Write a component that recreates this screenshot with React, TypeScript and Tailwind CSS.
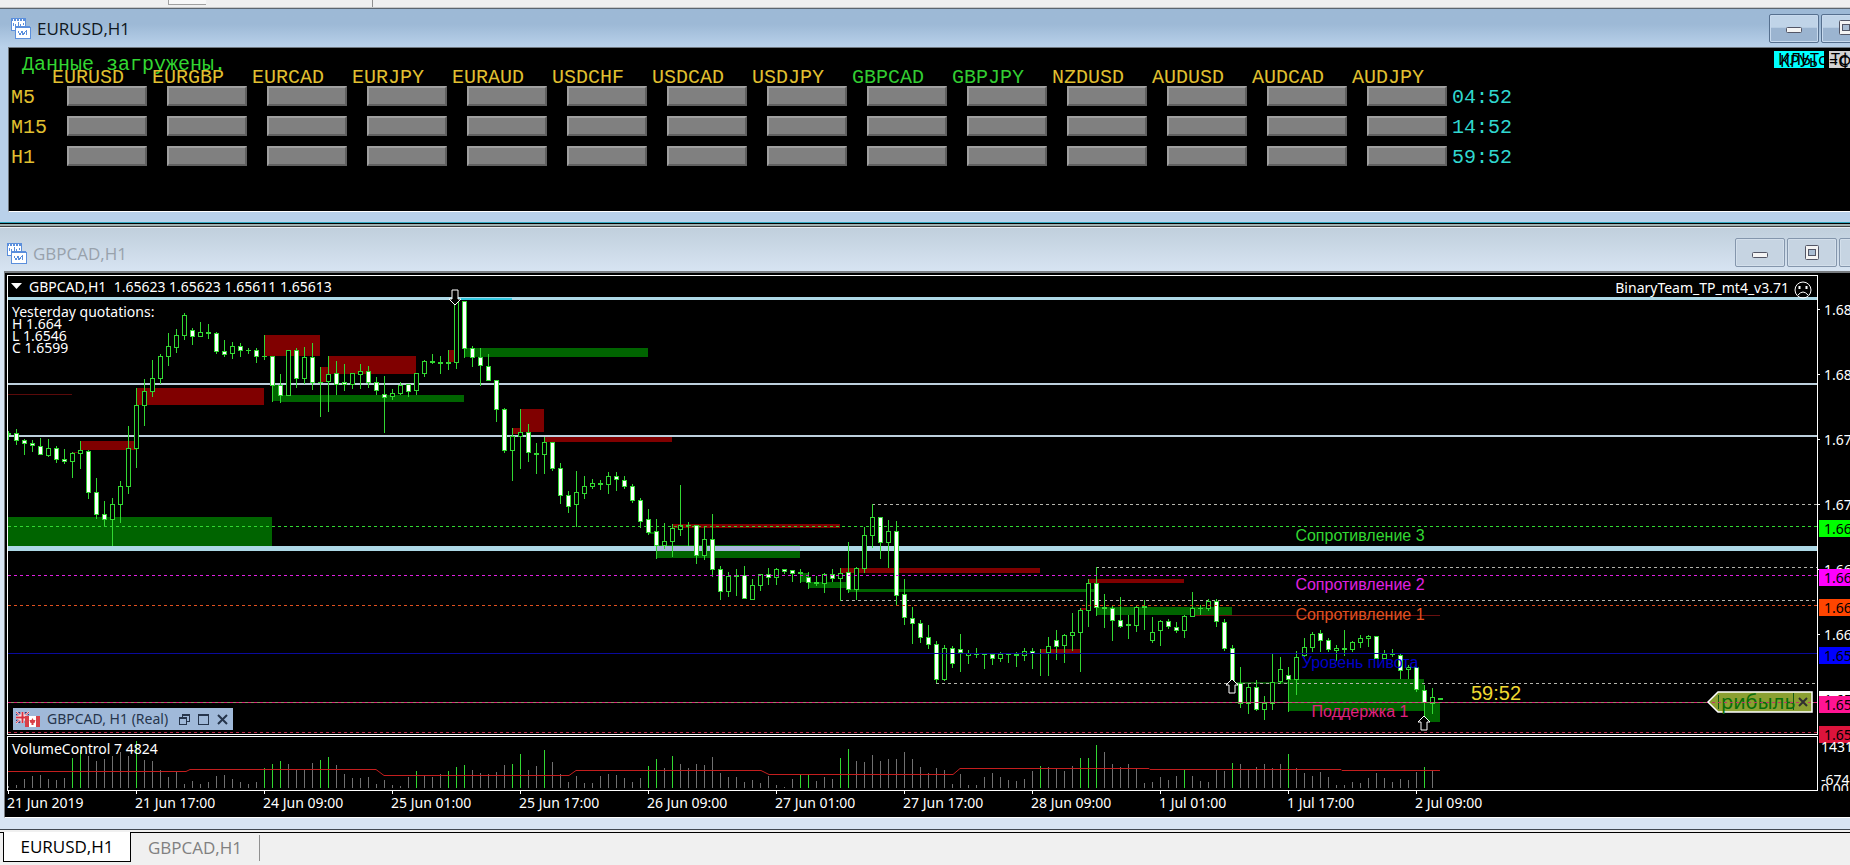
type Kind = 'u' | 'd' | 'x';
type Candle = [high: number, top: number, bottom: number, low: number, kind: Kind];
type Zone = [x: number, y: number, width: number, height: number, color: string];

const STEP = 8;
const RED = '#800000';
const GREEN = '#006400';
const LIME = '#32d732';

const symbols = [
  'EURUSD', 'EURGBP', 'EURCAD', 'EURJPY', 'EURAUD', 'USDCHF', 'USDCAD',
  'USDJPY', 'GBPCAD', 'GBPJPY', 'NZDUSD', 'AUDUSD', 'AUDCAD', 'AUDJPY',
];
const activeSymbols = ['GBPCAD', 'GBPJPY'];

const timeframes = [
  { name: 'M5', left: '04:52' },
  { name: 'M15', left: '14:52' },
  { name: 'H1', left: '59:52' },
];

const candles: Candle[] = [
  [155, 157, 159, 164, 'u'], [153, 157, 165, 169, 'd'], [163, 164, 168, 179, 'd'], [164, 167, 170, 176, 'd'],
  [162, 170, 179, 179, 'd'], [163, 172, 180, 181, 'u'], [170, 172, 184, 187, 'd'], [173, 183, 186, 188, 'd'],
  [176, 177, 186, 202, 'u'], [165, 174, 178, 193, 'u'], [174, 175, 217, 223, 'd'], [202, 216, 239, 243, 'd'],
  [225, 238, 244, 251, 'd'], [222, 228, 244, 270, 'u'], [205, 210, 229, 247, 'u'], [150, 172, 211, 218, 'u'],
  [112, 129, 173, 192, 'u'], [103, 115, 130, 150, 'u'], [84, 102, 116, 121, 'u'], [78, 80, 103, 108, 'u'],
  [57, 70, 81, 90, 'u'], [53, 59, 72, 77, 'u'], [37, 39, 60, 64, 'u'], [52, 54, 61, 69, 'd'],
  [46, 56, 61, 61, 'u'], [48, 56, 58, 63, 'd'], [56, 57, 76, 78, 'd'], [64, 75, 79, 81, 'd'],
  [66, 70, 78, 83, 'u'], [67, 70, 75, 81, 'd'], [72, 74, 75, 78, 'x'], [72, 74, 81, 87, 'd'],
  [59, 80, 81, 84, 'x'], [80, 80, 110, 126, 'd'], [98, 109, 120, 127, 'd'], [74, 74, 120, 120, 'u'],
  [72, 74, 103, 112, 'd'], [71, 81, 103, 108, 'u'], [67, 81, 107, 114, 'd'], [91, 106, 107, 141, 'x'],
  [80, 98, 106, 136, 'u'], [85, 97, 109, 119, 'd'], [88, 106, 109, 115, 'd'], [97, 97, 109, 113, 'u'],
  [88, 95, 99, 113, 'u'], [90, 95, 107, 112, 'd'], [101, 106, 115, 119, 'd'], [100, 118, 122, 157, 'd'],
  [113, 117, 121, 124, 'u'], [106, 109, 118, 119, 'u'], [108, 108, 116, 121, 'd'], [97, 97, 115, 119, 'u'],
  [84, 85, 98, 101, 'u'], [78, 85, 87, 88, 'x'], [80, 86, 88, 98, 'x'], [74, 86, 88, 94, 'x'],
  [23, 24, 87, 93, 'u'], [25, 25, 73, 82, 'd'], [70, 72, 82, 91, 'd'], [72, 81, 90, 110, 'd'],
  [78, 90, 105, 105, 'd'], [104, 104, 134, 146, 'd'], [132, 133, 175, 177, 'd'], [152, 160, 175, 205, 'u'],
  [133, 156, 161, 193, 'u'], [148, 156, 177, 186, 'd'], [167, 177, 179, 198, 'x'], [161, 166, 179, 198, 'u'],
  [166, 166, 193, 195, 'd'], [187, 192, 220, 228, 'd'], [215, 219, 231, 237, 'd'], [195, 216, 229, 251, 'u'],
  [200, 210, 218, 223, 'u'], [203, 207, 211, 213, 'u'], [204, 207, 209, 214, 'x'], [196, 200, 209, 218, 'u'],
  [196, 200, 204, 215, 'd'], [200, 204, 211, 213, 'd'], [208, 210, 225, 227, 'd'], [222, 224, 246, 252, 'd'],
  [233, 243, 257, 259, 'd'], [243, 255, 270, 283, 'd'], [247, 265, 270, 273, 'u'], [248, 252, 266, 281, 'u'],
  [209, 249, 254, 260, 'u'], [246, 249, 250, 270, 'x'], [249, 249, 280, 288, 'd'], [251, 263, 280, 284, 'u'],
  [238, 263, 294, 301, 'd'], [290, 293, 316, 324, 'd'], [296, 300, 316, 321, 'u'], [293, 299, 301, 320, 'x'],
  [290, 299, 323, 323, 'd'], [303, 309, 324, 324, 'u'], [298, 298, 310, 315, 'u'], [292, 298, 302, 309, 'd'],
  [292, 293, 302, 309, 'u'], [293, 293, 296, 298, 'd'], [294, 294, 298, 306, 'd'], [293, 296, 298, 307, 'x'],
  [296, 301, 307, 313, 'd'], [300, 306, 308, 310, 'x'], [297, 298, 308, 317, 'u'], [293, 298, 303, 306, 'd'],
  [292, 297, 303, 325, 'u'], [266, 296, 314, 317, 'd'], [291, 292, 314, 324, 'u'], [251, 259, 293, 297, 'u'],
  [228, 241, 260, 272, 'u'], [241, 241, 267, 283, 'd'], [244, 255, 267, 292, 'u'], [245, 255, 320, 329, 'd'],
  [303, 318, 342, 349, 'd'], [331, 342, 348, 368, 'd'], [344, 347, 362, 367, 'd'], [349, 361, 369, 373, 'd'],
  [365, 368, 404, 407, 'd'], [369, 372, 404, 405, 'u'], [370, 372, 388, 392, 'd'], [358, 373, 377, 396, 'd'],
  [374, 377, 380, 388, 'u'], [372, 378, 379, 382, 'x'], [378, 378, 379, 393, 'x'], [378, 378, 383, 389, 'd'],
  [376, 378, 383, 386, 'u'], [378, 378, 379, 387, 'x'], [376, 378, 380, 391, 'x'], [372, 375, 380, 385, 'u'],
  [372, 375, 378, 393, 'd'], [373, 377, 378, 400, 'x'], [361, 370, 377, 400, 'u'], [354, 364, 371, 384, 'd'],
  [358, 359, 370, 387, 'u'], [337, 356, 360, 375, 'u'], [332, 334, 357, 396, 'u'], [303, 307, 335, 351, 'u'],
  [291, 307, 332, 340, 'd'], [318, 331, 333, 352, 'x'], [330, 332, 345, 365, 'd'], [321, 344, 351, 352, 'd'],
  [339, 348, 350, 363, 'x'], [330, 331, 350, 356, 'u'], [324, 330, 332, 354, 'x'], [341, 356, 365, 367, 'u'],
  [344, 345, 355, 370, 'u'], [343, 345, 351, 353, 'd'], [346, 351, 355, 357, 'd'], [339, 340, 355, 362, 'u'],
  [316, 332, 341, 341, 'u'], [329, 332, 333, 339, 'x'], [323, 325, 333, 335, 'u'], [323, 325, 346, 351, 'd'],
  [343, 346, 373, 375, 'd'], [369, 372, 407, 408, 'd'], [391, 407, 428, 432, 'd'], [408, 411, 428, 438, 'u'],
  [404, 411, 434, 435, 'd'], [420, 427, 434, 444, 'u'], [378, 406, 428, 434, 'u'], [381, 393, 406, 408, 'u'],
  [391, 399, 404, 436, 'd'], [375, 381, 404, 419, 'u'], [362, 371, 380, 381, 'u'], [356, 358, 372, 376, 'u'],
  [354, 357, 365, 376, 'd'], [362, 364, 374, 376, 'd'], [369, 372, 375, 385, 'u'], [354, 372, 374, 380, 'x'],
  [365, 366, 374, 376, 'u'], [359, 362, 367, 372, 'u'], [359, 360, 363, 371, 'u'], [360, 360, 383, 383, 'd'],
  [374, 378, 383, 383, 'u'], [373, 378, 379, 381, 'x'], [378, 379, 395, 403, 'd'], [389, 391, 394, 403, 'u'],
  [391, 391, 414, 416, 'd'], [409, 414, 427, 441, 'd'], [412, 421, 428, 438, 'u'], [422, 422, 424, 424, 'x'],
];

const zones: Zone[] = [
  [0, 118, 64, 1, '#5a0a0a'], [64, 176, 8, 1, '#5a0a0a'], [72, 165, 56, 9, RED],
  [128, 112, 128, 17, RED], [0, 241, 264, 31, GREEN], [256, 59, 56, 21, RED],
  [264, 109, 8, 16, GREEN], [272, 119, 184, 7, GREEN], [312, 91, 8, 15, RED],
  [320, 80, 88, 18, RED], [440, 74, 8, 12, RED], [456, 72, 184, 9, GREEN],
  [504, 152, 8, 6, RED], [512, 133, 24, 23, RED], [536, 161, 128, 5, RED],
  [640, 256, 8, 2, GREEN], [664, 248, 168, 4, RED], [648, 269, 144, 13, GREEN],
  [792, 297, 8, 9, GREEN], [800, 306, 40, 6, GREEN], [840, 313, 248, 3, GREEN],
  [832, 292, 200, 5, RED], [1080, 303, 96, 4, RED], [1072, 332, 8, 2, RED],
  [1088, 331, 136, 8, GREEN], [1184, 339, 248, 1, '#6a1010'], [1032, 373, 40, 4, RED],
  [1224, 406, 56, 2, '#0a500a'], [1280, 403, 136, 32, GREEN], [1416, 427, 16, 19, GREEN],
];

const swingLevels = [
  { x: 864, y: 228 },
  { x: 1088, y: 291 },
  { x: 832, y: 324 },
  { x: 928, y: 407 },
];

const pivots = [
  { label: 'Сопротивление 3', x: 1352, y: 265, line: 250, color: '#32d732' },
  { label: 'Сопротивление 2', x: 1352, y: 314, line: 299, color: '#e020e0' },
  { label: 'Сопротивление 1', x: 1352, y: 344, line: 329, color: '#e05020' },
  { label: 'Поддержка 1', x: 1352, y: 441, line: 426, color: '#e0207f' },
];

const volumes = [
  2, 3, 9, 12, 13, 9, 8, 10, 30, 38, 32, 27, 29, 32, 36, 32, 47, 28, 27, 18, 11, 16, 4, 7, 4, 6, 12, 13, 9, 6,
  4, 6, 20, 24, 27, 24, 19, 19, 25, 28, 31, 23, 14, 10, 10, 11, 4, 8, 3, 2, 11, 17, 12, 11, 14, 17, 21, 23, 18, 15,
  14, 16, 23, 24, 34, 18, 22, 38, 26, 14, 6, 12, 5, 5, 12, 14, 13, 10, 6, 10, 22, 29, 20, 32, 24, 20, 24, 23, 31, 15,
  11, 11, 6, 8, 5, 12, 3, 1, 9, 13, 13, 7, 11, 9, 30, 39, 27, 26, 33, 27, 29, 29, 36, 29, 21, 15, 20, 18, 4, 14,
  3, 3, 11, 15, 11, 8, 7, 9, 17, 22, 21, 19, 17, 22, 30, 30, 43, 36, 24, 21, 24, 19, 5, 6, 11, 8, 12, 18, 12, 7,
  6, 18, 17, 25, 24, 19, 21, 24, 20, 24, 34, 20, 15, 12, 16, 11, 3, 3, 6, 5, 10, 15, 10, 6, 9, 8, 16, 21, 17,
];
const highVolumes = [
  8, 9, 16, 32, 33, 34, 39, 40, 51, 55, 56, 57, 63, 64, 67, 80, 81, 83, 99, 100, 104, 105, 129, 134, 135, 136, 147,
  153, 160, 177,
];

const dates = [
  '21 Jun 2019', '21 Jun 17:00', '24 Jun 09:00', '25 Jun 01:00', '25 Jun 17:00', '26 Jun 09:00',
  '27 Jun 01:00', '27 Jun 17:00', '28 Jun 09:00', '1 Jul 01:00', '1 Jul 17:00', '2 Jul 09:00',
];

const scaleTicks = [
  { y: 34, label: '1.68' },
  { y: 99, label: '1.68' },
  { y: 164, label: '1.67' },
  { y: 229, label: '1.67' },
  { y: 294, label: '1.66' },
  { y: 359, label: '1.66' },
];
const scaleTags = [
  { y: 245, label: '1.66', color: '#00ff00' },
  { y: 294, label: '1.66', color: '#ff00ff' },
  { y: 324, label: '1.66', color: '#ff4500' },
  { y: 372, label: '1.65', color: '#0000ff' },
  { y: 416, label: '1.65', color: '#ffffff' },
  { y: 421, label: '1.65', color: '#ff1493' },
  { y: 451, label: '1.65', color: '#dc143c' },
];

const ChartIcon = () => (
  <svg width="22" height="22" viewBox="0 0 22 22" className="shrink-0" shapeRendering="crispEdges" aria-hidden="true">
    <rect x="1" y="1" width="14" height="12" fill="#fff" stroke="#5b8fdc" />
    <path d="M1 2h14" stroke="#5b8fdc" strokeWidth="3" strokeDasharray="2 1" />
    <path d="M3 9V6M5 10V7M8 9V5M10 10V7M13 8V6" stroke="#5b8fdc" />
    <rect x="5" y="10" width="15" height="11" fill="#fff" stroke="#5b8fdc" />
    <path d="M5 10h15" stroke="#5b8fdc" strokeWidth="2" />
    <path d="M8 14l2 4 2-4 1 4 3-4v4" fill="none" stroke="#5b8fdc" />
  </svg>
);

const CaptionButton = ({ kind, active }: { kind: 'min' | 'max' | 'close'; active?: boolean }) => (
  <button
    type="button"
    aria-label={kind}
    className={`flex h-[29px] w-[50px] shrink-0 items-center justify-center rounded-xs border ${
      active
        ? 'border-[#56708f] bg-linear-to-b from-[#c0d4e8] from-45% to-[#9bb4d0] to-50% shadow-[inset_0_0_0_1px_#c8daee]'
        : 'border-[#8496ac] bg-[#c6d4e2] shadow-[inset_0_0_0_1px_#d3dfeb]'
    }`}
  >
    <svg width="16" height="16" viewBox="0 0 16 16" aria-hidden="true">
      {kind === 'min' && <rect x=".5" y="7.5" width="15" height="5" rx="1" fill="#f4f4f4" stroke="#535666" />}
      {kind === 'max' && (
        <>
          <rect x="1.5" y=".5" width="13" height="14" rx="1" fill="#f4f4f4" stroke="#535666" />
          <rect x="4.5" y="4.5" width="7" height="6" fill="#a9bdd3" stroke="#535666" />
        </>
      )}
      {kind === 'close' && <path d="M3 3l10 10M13 3L3 13" stroke="#535666" strokeWidth="3" />}
    </svg>
  </button>
);

const SignalTable = () => (
  <table className="table-fixed border-collapse font-['Liberation_Mono',monospace] text-xl">
    <thead>
      <tr className="leading-4">
        <th className="w-[43px] p-0" />
        {symbols.map((symbol) => (
          <th
            key={symbol}
            scope="col"
            className={`w-[100px] min-w-[100px] p-0 text-left font-normal ${activeSymbols.includes(symbol) ? 'text-[#32cd32]' : 'text-[#e0c030]'}`}
          >
            {symbol}
          </th>
        ))}
        <th className="w-[80px] p-0" />
      </tr>
    </thead>
    <tbody>
      {timeframes.map((frame) => (
        <tr key={frame.name} className="h-[30px] leading-6">
          <th scope="row" className="p-0 pl-[2px] text-left align-top font-normal text-[#e0c030]">
            {frame.name}
          </th>
          {symbols.map((symbol) => (
            <td key={symbol} className="p-0 pl-[15px] align-top">
              <button
                type="button"
                aria-label={`${symbol} ${frame.name}`}
                className="block h-5 w-20 border-2 border-t-[#a0a0a0] border-r-[#606060] border-b-[#606060] border-l-[#a0a0a0] bg-[#808080]"
              />
            </td>
          ))}
          <td className="p-0 align-top text-[#30d8d0]">{frame.left}</td>
        </tr>
      ))}
    </tbody>
  </table>
);

const Arrow = ({ x, y, down }: { x: number; y: number; down?: boolean }) => (
  <path
    transform={`translate(${x} ${y})`}
    d={down ? 'M-3 0H3V9H6L0 15L-6 9H-3Z' : 'M0 0L6 6H3V14H-3V6H-6Z'}
    fill="#000"
    stroke="#fff"
  />
);

const PriceChart = () => (
  <svg className="block h-full w-full" role="img" aria-label="GBPCAD H1">
    <g shapeRendering="crispEdges">
      {zones.map(([x, y, width, height, color]) => (
        <rect key={`${x}-${y}`} x={x} y={y} width={width} height={height} fill={color} />
      ))}
      <rect y="21" width="100%" height="3" fill="#add8e6" />
      <rect x="448" y="22" width="56" height="2" fill="#30c8e0" />
      <rect y="107" width="100%" height="2" fill="#bccfdc" />
      <rect y="159" width="100%" height="2" fill="#bccfdc" />
      <rect y="270" width="100%" height="5" fill="#add8e6" />
      <rect x="648" y="270" width="144" height="5" fill="#a9b8dc" />
      {swingLevels.map(({ x, y }) => (
        <line key={y} x1={x} x2="100%" y1={y + 0.5} y2={y + 0.5} stroke="#b4b4ac" strokeDasharray="3 3" />
      ))}
      {candles.map(([high, top, bottom, low, kind], i) => (
        <g key={i}>
          <rect x={i * STEP} y={high} width="1" height={low - high} fill={LIME} />
          <rect x={i * STEP - 2} y={top} width="5" height={bottom - top} fill={LIME} />
          {kind !== 'x' && bottom - top > 2 && (
            <rect x={i * STEP - 1} y={top + 1} width="3" height={bottom - top - 2} fill={kind === 'd' ? '#fff' : '#000'} />
          )}
        </g>
      ))}
      <rect y="377" width="100%" height="1" fill="#0a0a9c" />
      <rect y="426" width="100%" height="1" fill="#8c9460" />
      {pivots.map(({ line, color }) => (
        <line key={line} x2="100%" y1={line + 0.5} y2={line + 0.5} stroke={color} strokeDasharray="3 3" />
      ))}
      <line x2="100%" y1="456.5" y2="456.5" stroke="#b82848" strokeDasharray="3 3" />
    </g>

    <Arrow x={447} y={14} down />
    <Arrow x={1224} y={403} />
    <Arrow x={1416} y={440} />

    <g className="font-['Liberation_Sans',sans-serif] text-base" textAnchor="middle">
      {pivots.map(({ label, x, y, color }) => (
        <text key={label} x={x} y={y} fill={color}>{label}</text>
      ))}
      <text x="1352" y="392" fill="#0000c8">Уровень пивота</text>
    </g>
    <text x="1463" y="424" fill="#f0d830" className="font-['Liberation_Sans',sans-serif] text-xl">59:52</text>

    <g fill="#fff" className="text-sm">
      <path d="M3 7H14L8.500 13Z" />
      <text x="21" y="16" xmlSpace="preserve">GBPCAD,H1  1.65623 1.65623 1.65611 1.65613</text>
      <text x="4" y="41">Yesterday quotations:</text>
      <text x="4" y="53">H 1.664</text>
      <text x="4" y="65">L 1.6546</text>
      <text x="4" y="77">C 1.6599</text>
    </g>

    {/* pinned to the right edge */}
    <svg x="100%" overflow="visible">
      <text x="-28" y="17" fill="#fff" textAnchor="end" className="text-sm">BinaryTeam_TP_mt4_v3.71</text>
      <g fill="none" stroke="#fff">
        <circle cx="-14" cy="14" r="8" />
        <path d="M-19 19q5-6 10 0" />
        <path d="M-17.500 10v3M-10.500 10v3" strokeWidth="2" />
      </g>
      <path d="M-109 426L-99 416H-5V436H-99Z" fill="#8ba032" stroke="#fff" strokeWidth="1.500" />
      <path d="M-98.500 419v14M-23.500 417v17" stroke="#145a14" />
      <text x="-96" y="433" fill="#0a6e0a" className="text-xl">рибыль</text>
      <line x1="-105" x2="-4" y1="426.500" y2="426.500" stroke="#c03868" strokeDasharray="3 3" />
      <path d="M-18 422l8 8M-10 422l-8 8" stroke="#303030" strokeWidth="2" />
    </svg>
  </svg>
);

const VolumeChart = () => (
  <svg className="block h-full w-full" role="img" aria-label="VolumeControl">
    {volumes.map((value, i) => (
      <rect key={i} x={i * STEP} y={51 - value} width="1" height={value} fill={highVolumes.includes(i) ? LIME : '#707070'} shapeRendering="crispEdges" />
    ))}
    <polyline
      points="0,34.5 178,34.5 182,32.5 368,32.5 376,38.5 561,38.5 568,33.5 753,33.5 761,37.5 945,37.5 952,31.5 1141,31.5 1142,32.5 1333,32.5 1334,33.5 1432,33.5"
      fill="none"
      stroke="#c41e1e"
    />
    <text x="4" y="17" fill="#fff" className="text-sm">VolumeControl 7 4824</text>
  </svg>
);

const PriceScale = () => (
  <svg className="h-[516px] w-8 shrink-0 text-sm" role="img" aria-label="Price scale">
    {scaleTicks.map(({ y, label }) => (
      <g key={y} fill="#fff">
        <rect y={y} width="2" height="1" />
        <text x="6" y={y + 6}>{label}</text>
      </g>
    ))}
    {scaleTags.map(({ y, label, color }) => (
      <g key={y}>
        <rect x="1" y={y} width="31" height="17" fill={color} />
        <text x="6" y={y + 14} fill="#000">{label}</text>
      </g>
    ))}
    <g fill="#fff">
      <text x="3" y="477">1431</text>
      <text x="3" y="510">-674</text>
      <text x="3" y="519">0.00</text>
    </g>
  </svg>
);

const MiniBar = () => (
  <div className="absolute top-[432px] left-[5px] flex h-[22px] w-[220px] items-center bg-[#a0b9d9] px-[3px] text-sm text-[#26354c]">
    <svg width="24" height="16" viewBox="0 0 24 16" aria-hidden="true">
      <rect y="1" width="13" height="11" fill="#34347c" />
      <path d="M0 1l13 11M13 1L0 12" stroke="#fff" strokeWidth="2" />
      <path d="M0 1l13 11M13 1L0 12" stroke="#d83040" />
      <path d="M6.500 1v11M0 6.500h13" stroke="#fff" strokeWidth="4" />
      <path d="M6.500 1v11M0 6.500h13" stroke="#d83040" strokeWidth="2" />
      <rect x="9" y="5" width="15" height="11" fill="#fff" />
      <path d="M9 5h4v11H9zM20 5h4v11h-4z" fill="#d84048" />
      <path d="M16.500 7l1 2 2 0-1 3h-1v2h-2v-2h-1l-1-3 2 0z" fill="#d84048" />
    </svg>
    <span className="ml-[7px] flex-1 whitespace-nowrap">GBPCAD, H1 (Real)</span>
    <button type="button" aria-label="Restore" className="mr-2">
      <svg width="11" height="11" viewBox="0 0 11 11" fill="none" stroke="currentColor" shapeRendering="crispEdges">
        <path d="M3 3.500V.5h7.500v7H8M3 1.500h8M.5 3.500h7v7h-7zM.5 4.500h7" />
      </svg>
    </button>
    <button type="button" aria-label="Maximize" className="mr-2">
      <svg width="11" height="11" viewBox="0 0 11 11" fill="none" stroke="currentColor" shapeRendering="crispEdges">
        <path d="M.5 .5h10v10H.5zM.5 1.500h10" />
      </svg>
    </button>
    <button type="button" aria-label="Close" className="mr-[2px]">
      <svg width="11" height="11" viewBox="0 0 11 11" stroke="currentColor" strokeWidth="2">
        <path d="M1 1l9 9M10 1L1 10" />
      </svg>
    </button>
  </div>
);

export default function App() {
  return (
    <div className="flex min-h-screen w-full flex-col overflow-hidden bg-[#f0f0f0] font-['Noto_Sans',sans-serif]">
      <div className="flex h-2 items-start border-b border-[#c8c8c8]">
        <div className="ml-[168px] h-[5px] w-[38px] border-b border-l border-[#a0a0a0] bg-[#f8f8f8]" />
        <div className="ml-[166px] h-[7px] w-px bg-[#909090]" />
      </div>

      <section className="border-t border-[#5c6670] bg-[#b9d1ea]">
        <header className="flex h-[38px] items-center bg-linear-to-b from-[#9db9d6] from-40% to-[#b9d1ea] pl-[10px]">
          <ChartIcon />
          <h1 className="mt-[2px] ml-[5px] flex-1 font-['Open_Sans',sans-serif] text-[17px] text-[#101820]">EURUSD,H1</h1>
          <div className="-mr-[21px] flex gap-[2px]">
            <CaptionButton kind="min" active />
            <CaptionButton kind="max" active />
          </div>
        </header>
        <div className="relative ml-2 h-[165px] border-t border-b border-l border-t-[#707880] border-b-white border-l-[#707880] bg-black pt-3">
          <p className="pl-[13px] font-['Liberation_Mono',monospace] text-xl leading-[10px] text-[#32d732]">Данные загружены.</p>
          <SignalTable />
          <div className="absolute top-[3px] right-0 flex gap-[5px] text-base leading-[17px]">
            <div className="relative h-[17px] w-[50px] overflow-hidden bg-[#00ffff]">
              <span className="absolute left-1">ИЛЬТс</span>
              <span className="absolute top-[2px] left-[6px]">КРУь</span>
            </div>
            <div className="relative h-[17px] w-[21px] overflow-hidden bg-[#d3d3d3]">
              <span className="absolute left-[2px]">Тф</span>
              <span className="absolute top-[2px] left-0">=С</span>
            </div>
          </div>
        </div>
        <div className="h-[11px] border-b border-[#30a8c0]" />
      </section>

      <div className="h-[3px] border-t border-black bg-[#9fb0b0]" />

      <section className="border-t border-[#404040] bg-[#d7e4f2]">
        <header className="flex h-[44px] items-center border-t border-[#e8eef4] bg-linear-to-b from-[#c0cfdc] to-[#d7e4f2] pt-[6px] pl-[6px]">
          <ChartIcon />
          <h2 className="mt-[2px] ml-[5px] flex-1 font-['Open_Sans',sans-serif] text-[17px] text-[#98a2ac]">GBPCAD,H1</h2>
          <div className="-mr-[39px] flex gap-[2px]">
            <CaptionButton kind="min" />
            <CaptionButton kind="max" />
            <CaptionButton kind="close" />
          </div>
        </header>
        <div className="ml-1 flex border-t-2 border-b border-l border-t-[#787c80] border-b-white border-l-[#787c80] bg-black pt-[2px] pl-[2px]">
          <div className="min-w-0 flex-1">
            <div className="relative h-[460px] border border-white">
              <PriceChart />
              <MiniBar />
            </div>
            <div className="mt-px h-[55px] border border-white">
              <VolumeChart />
            </div>
            <div className="flex h-[26px] text-sm leading-[18px] whitespace-nowrap text-white">
              {dates.map((date) => (
                <div key={date} className="w-[128px]">
                  <div className="ml-px h-[3px] w-px bg-white" />
                  <time className="block">{date}</time>
                </div>
              ))}
            </div>
          </div>
          <PriceScale />
        </div>
        <div className="h-[12px] border-b border-[#404850]" />
      </section>

      <nav className="mt-[2px] flex h-[31px] border-t border-black pl-[3px] font-['Open_Sans',sans-serif] text-[17px]">
        <button type="button" className="-mt-px h-[30px] w-[128px] border-r border-b border-l border-black bg-white text-black">
          EURUSD,H1
        </button>
        <button type="button" className="my-[2px] w-[129px] border-r border-[#909090] text-[#808080]">
          GBPCAD,H1
        </button>
      </nav>
    </div>
  );
}
